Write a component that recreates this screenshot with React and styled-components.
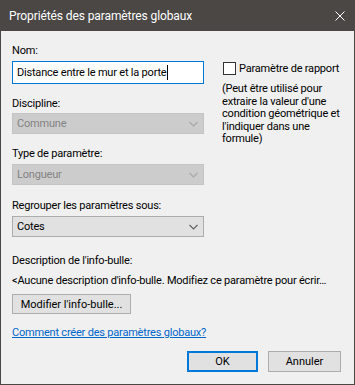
import styled, { createGlobalStyle } from 'styled-components';

const GlobalStyle = createGlobalStyle`
  html, body {
    margin: 0;
    padding: 0;
    background: #f0f0f0;
  }
  * {
    box-sizing: border-box;
  }
`;

const Window = styled.div`
  width: 355px;
  height: 385px;
  display: flex;
  flex-direction: column;
  background: #f0f0f0;
  border: 1px solid #4a4745;
  border-top: none;
  font-family: Roboto, "Noto Sans", sans-serif;
  font-size: 11px;
  letter-spacing: -0.2px;
  color: #000;
`;

const TitleBar = styled.div`
  height: 31px;
  flex: none;
  display: flex;
  align-items: center;
  justify-content: space-between;
  background: #4a4745;
  color: #fff;
  padding: 0 9px 0 9px;
  margin: 0 -1px;
  font-size: 12px;
  letter-spacing: -0.1px;
`;

const CloseIcon = styled.svg`
  width: 10px;
  height: 10px;
  margin-right: 1px;
`;

const Body = styled.div`
  padding: 13px 11px 0 11px;
  display: flex;
  flex-direction: column;
`;

const TopArea = styled.div`
  display: flex;
  gap: 18px;
`;

const LeftColumn = styled.div`
  width: 192px;
  display: flex;
  flex-direction: column;
`;

const RightColumn = styled.div`
  flex: 1;
  display: flex;
  flex-direction: column;
  padding-top: 18px;
`;

const Label = styled.div`
  line-height: 13px;
  margin-top: ${p => p.$top || 0}px;
  margin-bottom: ${p => p.$bottom || 4}px;
  white-space: nowrap;
`;

const TextInput = styled.div`
  height: 23px;
  border: 1px solid #0078d7;
  background: #fff;
  display: flex;
  align-items: center;
  padding-left: 4px;
`;

const Caret = styled.span`
  display: inline-block;
  width: 1px;
  height: 15px;
  background: #000;
  margin-left: 1px;
`;

const Select = styled.div`
  height: 21px;
  display: flex;
  align-items: center;
  justify-content: space-between;
  padding: 0 5px 0 4px;
  border: 1px solid ${p => (p.$disabled ? '#c4c4c4' : '#adadad')};
  background: ${p => (p.$disabled ? '#cccccc' : '#e1e1e1')};
  color: ${p => (p.$disabled ? '#838383' : '#000')};
`;

const Chevron = ({ disabled }) => (
  <svg width="9" height="6" viewBox="0 0 9 6">
    <path d="M0.5 1 L4.5 5 L8.5 1" fill="none" stroke={disabled ? '#a8a8a8' : '#606060'} strokeWidth="1.1" />
  </svg>
);

const CheckRow = styled.label`
  display: flex;
  align-items: center;
  gap: 3px;
  margin-left: 1px;
  line-height: 13px;
  white-space: nowrap;
`;

const CheckBox = styled.span`
  flex: none;
  width: 13px;
  height: 13px;
  border: 1px solid #333;
  background: #fff;
`;

const Note = styled.div`
  margin-top: 8px;
  line-height: 12.5px;
  white-space: nowrap;
`;

const InfoText = styled.div`
  line-height: 13px;
  margin-top: 3px;
  white-space: nowrap;
`;

const Button = styled.button`
  font: inherit;
  color: #000;
  height: ${p => p.$height || 21}px;
  width: ${p => p.$width}px;
  background: #e1e1e1;
  border: ${p => (p.$primary ? '2px solid #0078d7' : '1px solid #adadad')};
  padding: 0;
  text-align: center;
`;

const EditRow = styled.div`
  margin-top: 7px;
`;

const Link = styled.a`
  margin-top: 12px;
  line-height: 13px;
  color: #0066cc;
  text-decoration: underline;
  align-self: flex-start;
`;

const Footer = styled.div`
  display: flex;
  justify-content: flex-end;
  gap: 10px;
  margin-top: 12px;
  padding-right: 2px;
`;

export default function App() {
  return (
    <>
      <GlobalStyle />
      <Window>
        <TitleBar>
          <span>Propriétés des paramètres globaux</span>
          <CloseIcon viewBox="0 0 10 10">
            <path d="M0.5 0.5 L9.5 9.5 M9.5 0.5 L0.5 9.5" stroke="#fff" strokeWidth="1" />
          </CloseIcon>
        </TitleBar>
        <Body>
          <TopArea>
            <LeftColumn>
              <Label>Nom:</Label>
              <TextInput>
                Distance entre le mur et la porte<Caret />
              </TextInput>
              <Label $top={13} $bottom={3}>Discipline:</Label>
              <Select $disabled>
                Commune <Chevron disabled />
              </Select>
              <Label $top={13}>Type de paramètre:</Label>
              <Select $disabled>
                Longueur <Chevron disabled />
              </Select>
              <Label $top={14}>Regrouper les paramètres sous:</Label>
              <Select>
                Cotes <Chevron />
              </Select>
            </LeftColumn>
            <RightColumn>
              <CheckRow>
                <CheckBox />
                Paramètre de rapport
              </CheckRow>
              <Note>
                (Peut être utilisé pour<br />
                extraire la valeur d'une<br />
                condition géométrique et<br />
                l'indiquer dans une<br />
                formule)
              </Note>
            </RightColumn>
          </TopArea>
          <Label $top={17} $bottom={0}>Description de l'info-bulle:</Label>
          <InfoText>&lt;Aucune description d'info-bulle. Modifiez ce paramètre pour écrir…</InfoText>
          <EditRow>
            <Button $width={119} $height={20}>Modifier l'info-bulle...</Button>
          </EditRow>
          <Link>Comment créer des paramètres globaux?</Link>
          <Footer>
            <Button $primary $width={71}>OK</Button>
            <Button $width={73}>Annuler</Button>
          </Footer>
        </Body>
      </Window>
    </>
  );
}
